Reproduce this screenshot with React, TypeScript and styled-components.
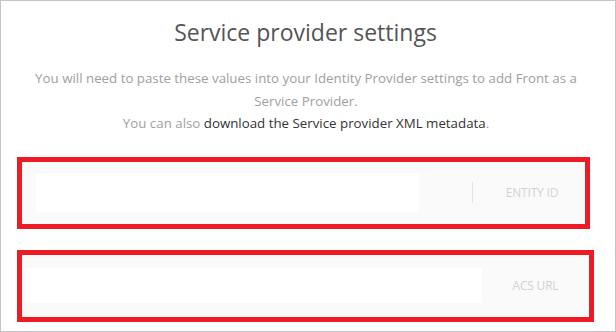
import styled, { createGlobalStyle } from "styled-components";

const GlobalStyle = createGlobalStyle`
  html, body {
    margin: 0;
    padding: 0;
    background: #ffffff;
  }
  * {
    box-sizing: border-box;
  }
`;

export default function App() {
  return (
    <>
      <GlobalStyle />
      <Frame>
        <Title>Service provider settings</Title>
        <Intro>
          You will need to paste these values into your Identity Provider
          settings to add Front as a Service Provider.
          <br />
          You can also <Link href="#">download the Service provider XML metadata</Link>.
        </Intro>
        <Fields>
          <Highlight $ghost>
            <Field $padLeft={14}>
              <ValueInput $width={383} $height={38} />
              <Divider />
              <Label $shift={6}>ENTITY ID</Label>
            </Field>
          </Highlight>
          <Highlight>
            <Field $padLeft={5}>
              <ValueInput $width={455} $height={35} />
              <Label>ACS URL</Label>
            </Field>
          </Highlight>
        </Fields>
      </Frame>
    </>
  );
}

const Frame = styled.div`
  width: 616px;
  height: 332px;
  border: 1px solid #c4c4c4;
  padding-top: 16px;
  font-family: "Open Sans", "Liberation Sans", sans-serif;
  overflow: hidden;
`;

const Title = styled.h1`
  margin: 0;
  padding-right: 5px;
  text-align: center;
  font-size: 23px;
  font-weight: 400;
  color: #555555;
  line-height: 30px;
`;

const Intro = styled.p`
  margin: 20px auto 0;
  width: 570px;
  padding-right: 4px;
  text-align: center;
  font-size: 13.3px;
  line-height: 22.5px;
  color: #a0a0a0;
`;

const Link = styled.a`
  color: #333333;
  text-decoration: none;
`;

const Fields = styled.div`
  display: flex;
  flex-direction: column;
  gap: 21px;
  margin: 22px 0 0 16px;
`;

const Highlight = styled.div<{ $ghost?: boolean }>`
  position: relative;
  width: ${(p) => (p.$ghost ? 573 : 577)}px;
  border: 5px solid #ed1c24;
  background: #fafafa;
  ${(p) =>
    p.$ghost &&
    `
    &::before {
      content: "";
      position: absolute;
      z-index: -1;
      left: -2px;
      top: -2px;
      right: -8px;
      bottom: -2px;
      border: 1px solid #dedede;
      border-radius: 4px;
    }
  `}
`;

const Field = styled.div<{ $padLeft: number }>`
  display: flex;
  align-items: center;
  height: 62px;
  padding-left: ${(p) => p.$padLeft}px;
`;

const ValueInput = styled.div<{ $width: number; $height: number }>`
  width: ${(p) => p.$width}px;
  height: ${(p) => p.$height}px;
  background: #ffffff;
`;

const Divider = styled.div`
  width: 1px;
  height: 21px;
  margin-left: 53px;
  background: #e2e2e2;
`;

const Label = styled.span<{ $shift?: number }>`
  flex: 1;
  padding-left: ${(p) => p.$shift ?? 0}px;
  text-align: center;
  font-size: 12px;
  color: #d2d2d2;
  letter-spacing: -0.2px;
`;
